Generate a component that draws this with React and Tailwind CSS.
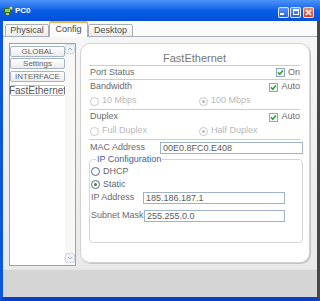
import React from 'react';

const Check = () => (
  <span className="w-[9px] h-[9px] border border-[#8fa6c4] bg-[#f4f6f8] flex items-center justify-center shrink-0">
    <svg viewBox="0 0 7 7" className="w-[7px] h-[7px]">
      <path d="M1 3.4 L2.8 5.2 L6 1.6" stroke="#22a022" strokeWidth="1.5" fill="none" />
    </svg>
  </span>
);

const Radio = ({ checked, disabled }) => (
  <span
    className={`w-[9px] h-[9px] rounded-full border bg-white flex items-center justify-center shrink-0 ${
      disabled ? 'border-[#c9c9c9]' : 'border-[#55698c]'
    }`}
  >
    {checked && (
      <span className={`w-[3px] h-[3px] rounded-full ${disabled ? 'bg-[#b9b9b9]' : 'bg-[#2f8a2f]'}`} />
    )}
  </span>
);

const RadioLabel = ({ label, checked, disabled }) => (
  <span className="flex items-center gap-[3px]">
    <Radio checked={checked} disabled={disabled} />
    <span className={disabled ? 'text-[#b8b8b8]' : 'text-[#666]'}>{label}</span>
  </span>
);

const ListItem = ({ label, className }) => (
  <div
    className={`w-[55px] h-[11px] border border-[#a4b4c9] rounded-[2px] bg-linear-to-b from-white to-[#ececec] flex items-center justify-center text-[8px] leading-none text-[#666] whitespace-nowrap ${className}`}
  >
    {label}
  </div>
);

const TitleButton = ({ children, close }) => (
  <div
    className={`w-[11px] h-[11px] rounded-[2px] border border-white/80 flex items-center justify-center ${
      close ? 'bg-linear-to-b from-[#f08a6a] to-[#d2411c]' : 'bg-linear-to-b from-[#5b95f8] to-[#2a62e0]'
    }`}
  >
    {children}
  </div>
);

export default function App() {
  return (
    <div className="w-[320px] h-[301px] overflow-hidden flex flex-col bg-[#0b4fd6] font-['Liberation_Sans',Arial,sans-serif]">
      {/* Title bar */}
      <div className="h-[21px] shrink-0 flex items-center pl-[3px] pr-[6px] bg-linear-to-b from-[#4a94fa] via-[#0a5ee6] to-[#0550d8]">
        <svg viewBox="0 0 10 10" className="w-[10px] h-[10px]">
          <rect x="1" y="2" width="7" height="5" fill="#2f6b2a" />
          <rect x="2" y="3" width="5" height="3" fill="#8fd24a" />
          <rect x="3" y="7" width="3" height="2" fill="#c9c06a" />
          <circle cx="8" cy="2" r="1.6" fill="#e6d34a" />
        </svg>
        <span className="ml-[2px] text-[8px] font-bold text-white leading-none">PC0</span>
        <div className="ml-auto flex items-center gap-[1px] mt-[3px]">
          <TitleButton>
            <span className="w-[4px] h-[2px] bg-white self-end mb-[2px] mr-[3px]" />
          </TitleButton>
          <TitleButton>
            <span className="w-[6px] h-[6px] border border-white border-t-2" />
          </TitleButton>
          <div className="ml-[1px]">
            <TitleButton close>
              <svg viewBox="0 0 7 7" className="w-[7px] h-[7px]">
                <path d="M1 1 L6 6 M6 1 L1 6" stroke="white" strokeWidth="1.5" />
              </svg>
            </TitleButton>
          </div>
        </div>
      </div>

      {/* Window body */}
      <div className="flex-1 flex flex-col border-l-[3px] border-l-[#0c55dc] border-r-[3px] border-r-[#474747] border-b-[4px] border-b-[#0a3fc6] bg-[#d5d5d5]">
        {/* Tabs */}
        <div className="h-[16px] shrink-0 flex items-end pl-[2px] bg-[#fbfbfb] border-b border-[#a7b0b8] text-[9px] text-[#4a4a4a]">
          <div className="w-[44px] h-[13px] mb-[-1px] border border-[#a7b0b8] rounded-t-[2px] bg-linear-to-b from-white to-[#ecebe6] flex items-center justify-center">
            Physical
          </div>
          <div className="w-[39px] h-[16px] mb-[-1px] border-x border-[#a7b0b8] border-t-2 border-t-[#f0b24a] rounded-t-[2px] bg-[#fcfcfc] flex items-center justify-center">
            Config
          </div>
          <div className="w-[45px] h-[13px] mb-[-1px] border border-[#a7b0b8] rounded-t-[2px] bg-linear-to-b from-white to-[#ecebe6] flex items-center justify-center">
            Desktop
          </div>
        </div>

        {/* Tab page */}
        <div className="h-[232px] shrink-0 flex pl-[6px] pt-[6px] bg-linear-to-b from-[#f6f6f6] to-[#e9e9e9]">
          {/* Left list */}
          <div className="w-[67px] h-[223px] border border-[#8ea4c2] bg-white flex">
            <div className="w-[55px] flex flex-col pt-[2px]">
              <ListItem label="GLOBAL" />
              <ListItem label="Settings" className="mt-[1px]" />
              <ListItem label="INTERFACE" className="mt-[2px]" />
              <div className="w-[55px] h-[11px] mt-[3px] border border-[#b4c2d4] rounded-[2px] bg-white flex items-center justify-center text-[10px] leading-none text-[#5a5a5a] whitespace-nowrap overflow-visible">
                FastEthernet
              </div>
            </div>
            <div className="w-[10px] flex flex-col justify-between bg-[#f8f8f6]">
              <div className="h-[10px] border border-[#d5dce8] rounded-[2px] bg-[#eef1f6] flex items-center justify-center">
                <svg viewBox="0 0 6 4" className="w-[6px] h-[4px]">
                  <path d="M1 3 L3 1 L5 3" stroke="#a8b0bc" strokeWidth="1" fill="none" />
                </svg>
              </div>
              <div className="h-[10px] mb-[2px] border border-[#d5dce8] rounded-[2px] bg-[#eef1f6] flex items-center justify-center">
                <svg viewBox="0 0 6 4" className="w-[6px] h-[4px]">
                  <path d="M1 1 L3 3 L5 1" stroke="#a8b0bc" strokeWidth="1" fill="none" />
                </svg>
              </div>
            </div>
          </div>

          {/* Config card */}
          <div className="ml-[4px] w-[230px] h-[220px] bg-white border border-[#d2d2d2] rounded-[10px] shadow-[1px_1px_0_#c4c4c4] pl-[8px] pr-[6px] pt-[7px] flex flex-col text-[9px] text-[#6a6a6a]">
            <div className="h-[15px] mr-[3px] border-b border-[#cdcdcd] text-center text-[11px] leading-[15px] text-[#777]">
              FastEthernet
            </div>
            <div className="h-[14px] mr-[3px] border-b border-[#cdcdcd] pl-[1px] flex items-center justify-between">
              <span>Port Status</span>
              <span className="flex items-center gap-[3px]">
                <Check />
                <span>On</span>
              </span>
            </div>
            <div className="h-[30px] mr-[3px] border-b border-[#cdcdcd] pl-[1px] flex flex-col">
              <div className="h-[14px] flex items-center justify-between">
                <span>Bandwidth</span>
                <span className="flex items-center gap-[3px]">
                  <Check />
                  <span>Auto</span>
                </span>
              </div>
              <div className="h-[14px] flex items-center">
                <span className="w-[109px]">
                  <RadioLabel label="10 Mbps" disabled />
                </span>
                <RadioLabel label="100 Mbps" checked disabled />
              </div>
            </div>
            <div className="h-[30px] mr-[3px] border-b border-[#cdcdcd] pl-[1px] flex flex-col">
              <div className="h-[14px] flex items-center justify-between">
                <span>Duplex</span>
                <span className="flex items-center gap-[3px]">
                  <Check />
                  <span>Auto</span>
                </span>
              </div>
              <div className="h-[14px] flex items-center">
                <span className="w-[109px]">
                  <RadioLabel label="Full Duplex" disabled />
                </span>
                <RadioLabel label="Half Duplex" checked disabled />
              </div>
            </div>
            <div className="h-[13px] mt-[1px] pl-[1px] flex items-center">
              <span className="w-[70px]">MAC Address</span>
              <div className="flex-1 h-[12px] border border-[#9fb4cc] px-[2px] leading-[10px] text-[#5a5a5a]">
                00E0.8FC0.E408
              </div>
            </div>
            <fieldset className="h-[89px] border border-[#d6d6d6] rounded-[4px] pl-[1px]">
              <legend className="ml-[5px] px-[1px] text-[9px] leading-[11px] text-[#45609a]">IP Configuration</legend>
              <div className="h-[13px] flex items-center">
                <RadioLabel label="DHCP" />
              </div>
              <div className="h-[13px] flex items-center">
                <RadioLabel label="Static" checked />
              </div>
              <div className="h-[13px] flex items-center">
                <span className="w-[52px]">IP Address</span>
                <div className="w-[142px] h-[12px] border border-[#9fb4cc] px-[2px] leading-[10px] text-[#5a5a5a]">
                  185.186.187.1
                </div>
              </div>
              <div className="h-[13px] mt-[5px] flex items-center">
                <span className="w-[53px] whitespace-nowrap">Subnet Mask</span>
                <div className="w-[141px] h-[12px] border border-[#9fb4cc] px-[2px] leading-[10px] text-[#5a5a5a]">
                  255.255.0.0
                </div>
              </div>
            </fieldset>
          </div>
        </div>

        {/* Bottom strip */}
        <div className="flex-1 bg-[#d5d5d5] border-t border-[#e4e4e4]" />
      </div>
    </div>
  );
}
